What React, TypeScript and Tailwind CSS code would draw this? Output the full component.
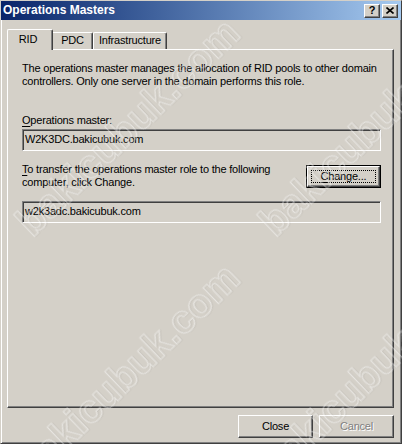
import React from "react";

const raised =
  "border border-t-white border-l-white border-r-[#404040] border-b-[#404040] shadow-[inset_-1px_-1px_#808080] bg-[#d4d0c8]";
const sunken =
  "border border-t-[#808080] border-l-[#808080] border-r-white border-b-white shadow-[inset_1px_1px_#404040] bg-[#d4d0c8]";

function Watermark({ left, top }: { left: string; top: string }) {
  return (
    <span
      className={`pointer-events-none absolute ${left} ${top} -rotate-[44deg] whitespace-nowrap font-['Liberation_Sans',Arial,sans-serif] text-[40px] font-bold leading-[46px] tracking-normal text-transparent [-webkit-text-stroke:1.2px_rgba(255,255,255,0.45)] drop-shadow-[1px_1px_0_rgba(0,0,0,0.1)]`}
    >
      bakicubuk.com
    </span>
  );
}

function Button({
  children,
  disabled,
}: {
  children: React.ReactNode;
  disabled?: boolean;
}) {
  return (
    <div
      className={`${raised} flex h-[23px] w-[75px] items-center justify-center ${
        disabled ? "text-[#808080] [text-shadow:1px_1px_0_#ffffff]" : "text-black"
      }`}
    >
      {children}
    </div>
  );
}

function TextBox({ value }: { value: string }) {
  return (
    <div className={`${sunken} flex h-[22px] items-center pl-[2px] pb-px`}>
      {value}
    </div>
  );
}

export default function App() {
  return (
    <div className="relative h-[444px] w-[402px] overflow-hidden bg-[#d4d0c8] font-['Liberation_Sans',Arial,sans-serif] text-[11px] leading-[13px] tracking-[-0.2px] text-black">
      <div className="flex h-full flex-col border border-t-[#d4d0c8] border-l-[#d4d0c8] border-r-[#404040] border-b-[#404040] shadow-[inset_1px_1px_#ffffff,inset_-1px_-1px_#808080]">
        {/* title bar */}
        <div className="flex h-[19px] items-center justify-between bg-gradient-to-r from-[#0a246a] to-[#a6caf0] pl-[2px] pr-[3px]">
          <span className="text-[12px] font-bold leading-[19px] tracking-normal text-white">
            Operations Masters
          </span>
          <div className="flex gap-[2px]">
            <div className={`${raised} flex h-[14px] w-[16px] items-center justify-center text-[11px] font-bold leading-none`}>
              ?
            </div>
            <div className={`${raised} flex h-[14px] w-[16px] items-center justify-center`}>
              <svg width="8" height="7" viewBox="0 0 8 7">
                <path d="M0.5 0.5 L7.5 6.5 M7.5 0.5 L0.5 6.5" stroke="black" strokeWidth="1.6" />
              </svg>
            </div>
          </div>
        </div>

        <div className="flex flex-1 flex-col pl-[6px] pr-[7px] pt-[9px]">
          {/* tabs */}
          <div className="flex h-[20px] items-end">
            <div className="relative z-10 -mb-px flex h-[21px] w-[46px] items-start justify-center rounded-tl-[2px] rounded-tr-[2px] border-l border-t border-r border-l-white border-t-white border-r-[#404040] bg-[#d4d0c8] pt-[3px] pr-[4px] shadow-[inset_-1px_0_#808080]">
              RID
            </div>
            <div className="flex h-[17px] w-[40px] items-center justify-center rounded-tr-[2px] border-t border-r border-t-white border-r-[#404040] pb-px shadow-[inset_-1px_0_#808080]">
              PDC
            </div>
            <div className="flex h-[17px] w-[74px] items-center justify-center rounded-tl-[2px] rounded-tr-[2px] border-l border-t border-r border-l-white border-t-white border-r-[#404040] pb-px shadow-[inset_-1px_0_#808080]">
              Infrastructure
            </div>
          </div>

          {/* panel */}
          <div className="flex h-[359px] flex-col border border-t-white border-l-white border-r-[#404040] border-b-[#404040] pl-[14px] pr-[12px] pt-[12px] shadow-[inset_-1px_-1px_#808080]">
            <p className="whitespace-nowrap">
              The operations master manages the allocation of RID pools to other domain
              <br />
              controllers. Only one server in the domain performs this role.
            </p>
            <p className="mt-[26px]">
              <span className="underline underline-offset-2">O</span>perations master:
            </p>
            <div className="mt-[2px]">
              <TextBox value="W2K3DC.bakicubuk.com" />
            </div>
            <div className="mt-[12px] flex items-start justify-between">
              <p className="whitespace-nowrap">
                <span className="underline underline-offset-2">T</span>o transfer the operations master role to the following
                <br />
                computer, click Change.
              </p>
              <div className="mt-[2px] border border-black">
                <div className={`${raised} flex h-[21px] w-[73px] p-[3px]`}>
                  <div className="flex flex-1 items-center justify-center border border-dotted border-black">
                    <span>
                      <span className="underline underline-offset-2">C</span>hange...
                    </span>
                  </div>
                </div>
              </div>
            </div>
            <div className="mt-[12px]">
              <TextBox value="w2k3adc.bakicubuk.com" />
            </div>
          </div>

          {/* bottom buttons */}
          <div className="mt-[7px] flex justify-end gap-[6px]">
            <Button>Close</Button>
            <Button disabled>Cancel</Button>
          </div>
        </div>
      </div>

      <Watermark left="left-[-18px]" top="top-[104px]" />
      <Watermark left="left-[-18px]" top="top-[349px]" />
      <Watermark left="left-[225px]" top="top-[104px]" />
      <Watermark left="left-[225px]" top="top-[349px]" />
    </div>
  );
}
